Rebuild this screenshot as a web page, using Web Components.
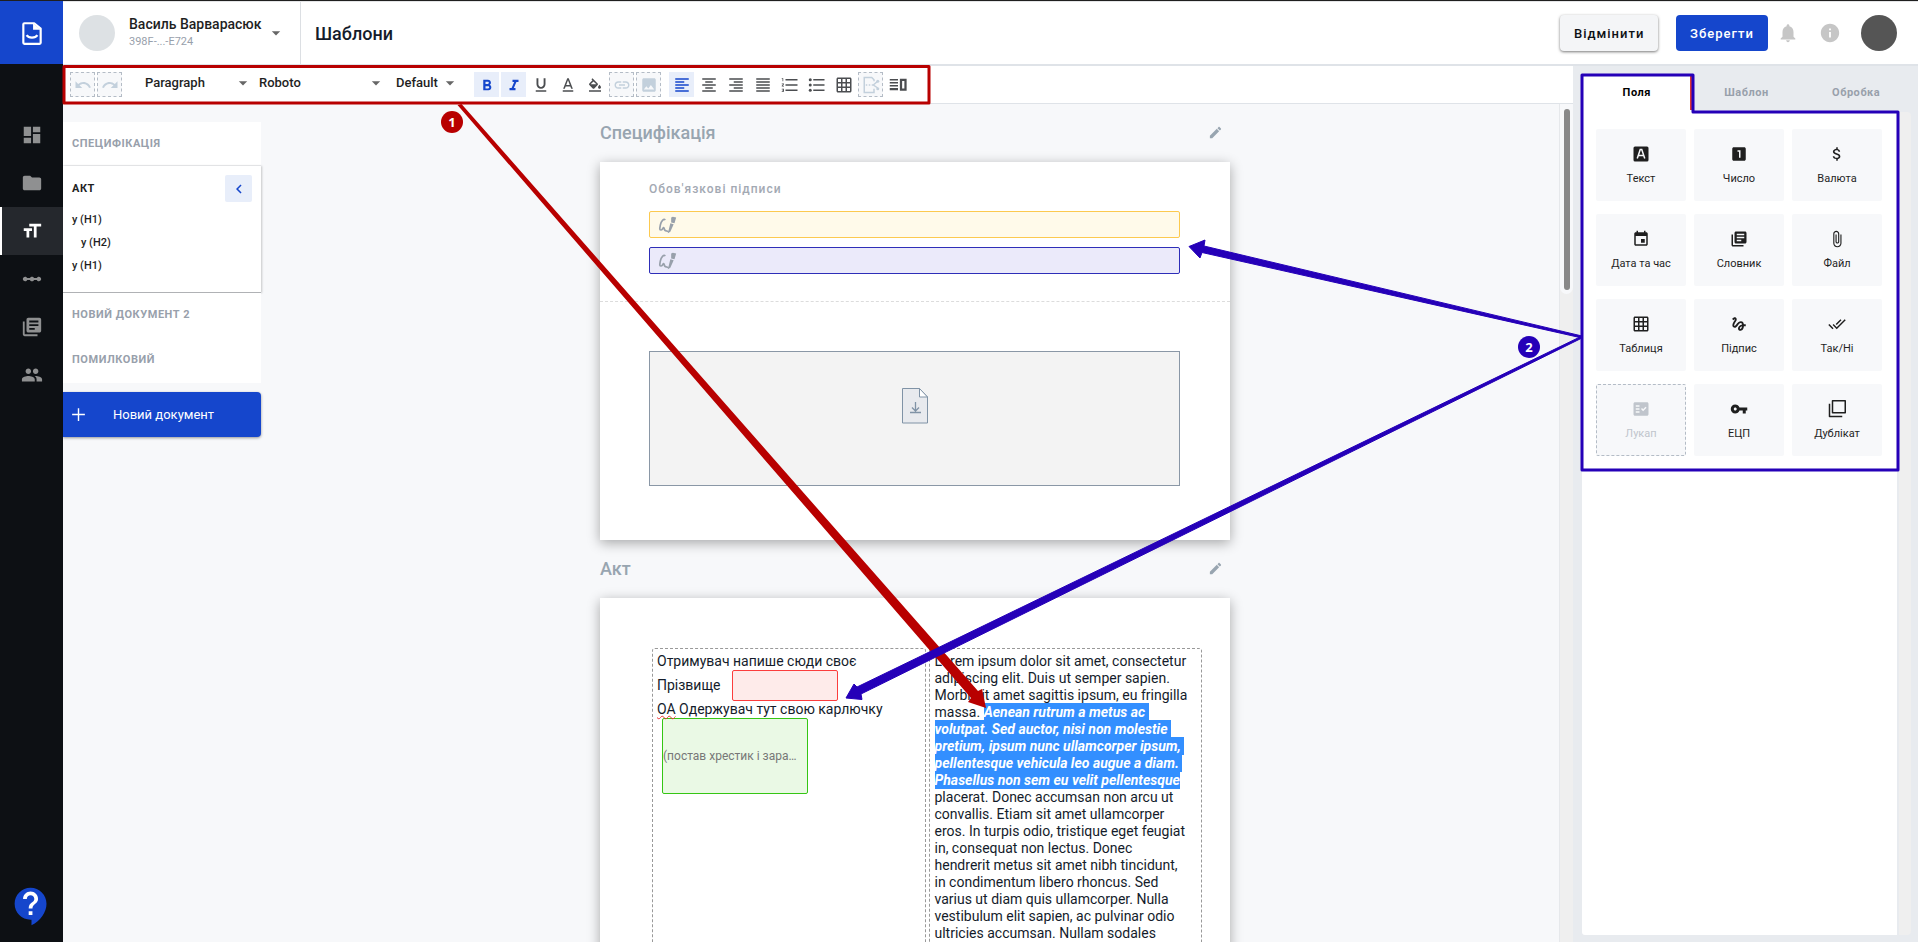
<!DOCTYPE html>
<html lang="uk">
<head>
<meta charset="utf-8">
<title>Шаблони</title>
<style>
html, body { height: 100%; }
body { margin: 0; overflow: hidden; font-family: Roboto, "Noto Sans", sans-serif; color: #1f1f1f; background: #f7f8fa; }
</style>
</head>
<body>
<template-app></template-app>
<script>
const P = d => `<path d="${d}"/>`;
const ICONS = {
  dashboard: P('M3 13h8V3H3v10zm0 8h8v-6H3v6zm10 0h8V11h-8v10zm0-18v6h8V3h-8z'),
  folder: P('M10 4H4c-1.1 0-1.99.9-1.99 2L2 18c0 1.1.9 2 2 2h16c1.1 0 2-.9 2-2V8c0-1.1-.9-2-2-2h-8l-2-2z'),
  size: P('M9 4v3h5v12h3V7h5V4H9zm-6 8h3v7h3v-7h3V9H3v3z'),
  linear: P('M19.5 9.5c-1.03 0-1.9.62-2.29 1.5h-2.92c-.39-.88-1.26-1.5-2.29-1.5s-1.9.62-2.29 1.5H6.79c-.39-.88-1.26-1.5-2.29-1.5C3.12 9.5 2 10.62 2 12s1.12 2.5 2.5 2.5c1.03 0 1.9-.62 2.29-1.5h2.92c.39.88 1.26 1.5 2.29 1.5s1.9-.62 2.29-1.5h2.92c.39.88 1.26 1.5 2.29 1.5 1.38 0 2.5-1.12 2.5-2.5s-1.12-2.5-2.5-2.5z'),
  books: P('M4 6H2v14c0 1.1.9 2 2 2h14v-2H4V6zm16-4H8c-1.1 0-2 .9-2 2v12c0 1.1.9 2 2 2h12c1.1 0 2-.9 2-2V4c0-1.1-.9-2-2-2zm-1 9H9V9h10v2zm-4 4H9v-2h6v2zm4-8H9V5h10v2z'),
  people: P('M16 11c1.66 0 2.99-1.34 2.99-3S17.66 5 16 5c-1.66 0-3 1.34-3 3s1.34 3 3 3zm-8 0c1.66 0 2.99-1.34 2.99-3S9.66 5 8 5C6.34 5 5 6.34 5 8s1.34 3 3 3zm0 2c-2.33 0-7 1.17-7 3.5V19h14v-2.5c0-2.33-4.67-3.5-7-3.5zm8 0c-.29 0-.62.02-.97.05 1.16.84 1.97 1.97 1.97 3.45V19h6v-2.5c0-2.33-4.67-3.5-7-3.5z'),
  help: '<circle cx="11.5" cy="10.5" r="7.5" fill="#fff"/>' + P('M11.5 2C6.81 2 3 5.81 3 10.5S6.81 19 11.5 19h.5v3c4.86-2.34 8-7 8-11.5C20 5.81 16.19 2 11.5 2zm1 14.5h-2v-2h2v2zm0-3.5h-2c0-3.25 3-3 3-5 0-1.1-.9-2-2-2s-2 .9-2 2h-2c0-2.21 1.79-4 4-4s4 1.79 4 4c0 2.5-3 2.75-3 5z'),
  logo: '<path d="M5 3h9l6 5v13q0 1-1 1H5q-1 0-1-1V4q0-1 1-1z" fill="none" stroke="currentColor" stroke-width="2" stroke-linejoin="round"/><path d="M13 3v6h7z"/><path d="M7 14c2 3 8 3 10 0" fill="none" stroke="currentColor" stroke-width="2"/>',
  undo: P('M12.5 8c-2.65 0-5.05.99-6.9 2.6L2 7v9h9l-3.62-3.62c1.39-1.16 3.16-1.88 5.12-1.88 3.54 0 6.55 2.31 7.6 5.5l2.37-.78C21.08 11.03 17.15 8 12.5 8z'),
  redo: P('M18.4 10.6C16.55 8.99 14.15 8 11.5 8c-4.65 0-8.58 3.03-9.96 7.22L3.9 16c1.05-3.19 4.05-5.5 7.6-5.5 1.95 0 3.73.72 5.12 1.88L13 16h9V7l-3.6 3.6z'),
  bold: P('M15.6 11.79c.97-.67 1.65-1.77 1.65-2.79 0-2.26-1.75-4-4-4H7v14h7.04c2.09 0 3.71-1.7 3.71-3.79 0-1.52-.86-2.82-2.15-3.42zM10 7.5h3c.83 0 1.5.67 1.5 1.5s-.67 1.5-1.5 1.5h-3v-3zm3.5 9H10v-3h3.5c.83 0 1.5.67 1.5 1.5s-.67 1.5-1.5 1.5z'),
  italic: P('M10 5v3h2.21l-3.42 8H6v3h8v-3h-2.21l3.42-8H18V5z'),
  underline: P('M12 17c3.31 0 6-2.69 6-6V3h-2.5v8c0 1.93-1.57 3.5-3.5 3.5S8.5 12.93 8.5 11V3H6v8c0 3.31 2.69 6 6 6zm-7 2v2h14v-2H5z'),
  color: P('M11 3L5.5 17h2.25l1.12-3h6.25l1.12 3h2.25L13 3h-2zm-1.38 9L12 5.67 14.38 12H9.62zM5 19h14v2H5z'),
  fill: P('M15.56 9.94L8.62 3 7.21 4.41l1.38 1.38-4.15 4.15c-.59.59-.59 1.54 0 2.12l4.5 4.5c.29.29.68.44 1.06.44s.77-.15 1.06-.44l4.5-4.5c.59-.58.59-1.53 0-2.12zM6.2 11L10 7.2 13.8 11zM18 11.5s-2 2.17-2 3.5c0 1.1.9 2 2 2s2-.9 2-2c0-1.33-2-3.5-2-3.5zM4 19h16v2H4z'),
  link: P('M3.9 12c0-1.71 1.39-3.1 3.1-3.1h4V7H7c-2.76 0-5 2.24-5 5s2.24 5 5 5h4v-1.9H7c-1.71 0-3.1-1.39-3.1-3.1zM8 13h8v-2H8v2zm9-6h-4v1.9h4c1.71 0 3.1 1.39 3.1 3.1s-1.39 3.1-3.1 3.1h-4V17h4c2.76 0 5-2.24 5-5s-2.24-5-5-5z'),
  image: P('M21 19V5c0-1.1-.9-2-2-2H5c-1.1 0-2 .9-2 2v14c0 1.1.9 2 2 2h14c1.1 0 2-.9 2-2zM8.5 13.5l2.5 3.01L14.5 12l4.5 6H5l3.5-4.5z'),
  left: P('M3 3h18v2H3zM3 7h12v2H3zM3 11h18v2H3zM3 15h12v2H3zM3 19h18v2H3z'),
  center: P('M3 3h18v2H3zM7 7h10v2H7zM3 11h18v2H3zM7 15h10v2H7zM3 19h18v2H3z'),
  right: P('M3 3h18v2H3zM9 7h12v2H9zM3 11h18v2H3zM9 15h12v2H9zM3 19h18v2H3z'),
  justify: P('M3 3h18v2H3zM3 7h18v2H3zM3 11h18v2H3zM3 15h18v2H3zM3 19h18v2H3z'),
  ol: P('M1 18h2v.5H2v1h1v.5H1v1h3v-4H1v1zm1-11h1V3H1v1h1v3zm-1 4h1.8L1 13.1v.9h3v-1H2.2L4 10.9V10H1v1zm5-7v2h16V4H6zm0 16h16v-2H6v2zm0-7h16v-2H6v2z'),
  ul: '<circle cx="3" cy="5" r="2"/><circle cx="3" cy="12" r="2"/><circle cx="3" cy="19" r="2"/>' + P('M7 4h15v2H7zM7 11h15v2H7zM7 18h15v2H7z'),
  grid: P('M20 2H4c-1.1 0-2 .9-2 2v16c0 1.1.9 2 2 2h16c1.1 0 2-.9 2-2V4c0-1.1-.9-2-2-2zM8 20H4v-4h4v4zm0-6H4v-4h4v4zm0-6H4V4h4v4zm6 12h-4v-4h4v4zm0-6h-4v-4h4v4zm0-6h-4V4h4v4zm6 12h-4v-4h4v4zm0-6h-4v-4h4v4zm0-6h-4V4h4v4z'),
  cut: '<path d="M16 7V5l-3-3H3v20h13v-5" fill="none" stroke="currentColor" stroke-width="2"/><path d="M5 12h2M9 12h2M13 12h2l6 4M15 12l6-5" fill="none" stroke="currentColor" stroke-width="2"/><circle cx="21" cy="7" r="2"/><circle cx="21" cy="17" r="2"/>',
  split: P('M1 4h11v2H1zM1 8h11v2H1zM1 12h11v2H1zM1 16h11v3H1z') + '<path d="M16 5h6v13h-6z" fill="none" stroke="currentColor" stroke-width="3"/>',
  chevron: P('M15.41 7.41L14 6l-6 6 6 6 1.41-1.41L10.83 12z'),
  add: P('M21 13h-8v8h-2v-8H3v-2h8V3h2v8h8z'),
  edit: P('M3 17.25V21h3.75L17.81 9.94l-3.75-3.75L3 17.25zM20.71 7.04c.39-.39.39-1.02 0-1.41l-2.34-2.34c-.39-.39-1.02-.39-1.41 0l-1.83 1.83 3.75 3.75 1.83-1.83z'),
  bell: P('M12 22c1.1 0 2-.9 2-2h-4c0 1.1.89 2 2 2zm6-6v-5c0-3.07-1.64-5.64-4.5-6.32V4c0-.83-.67-1.5-1.5-1.5s-1.5.67-1.5 1.5v.68C7.63 5.36 6 7.92 6 11v5l-2 2v1h16v-1l-2-2z'),
  info: P('M12 2C6.48 2 2 6.48 2 12s4.48 10 10 10 10-4.48 10-10S17.52 2 12 2zm1 15h-2v-6h2v6zm0-8h-2V7h2v2z'),
  caret: P('M7 10l5 5 5-5z'),
  text: '<rect x="2" y="2" width="20" height="20" rx="2"/><path d="M7 18l4-12h2l4 12M9 14h6" fill="none" stroke="#f7f8fa" stroke-width="2"/>',
  one: P('M19 3H5c-1.1 0-2 .9-2 2v14c0 1.1.9 2 2 2h14c1.1 0 2-.9 2-2V5c0-1.1-.9-2-2-2zm-5 14h-2V9h-2V7h4v10z'),
  money: P('M11.8 10.9c-2.27-.59-3-1.2-3-2.15 0-1.09 1.01-1.85 2.7-1.85 1.78 0 2.44.85 2.5 2.1h2.21c-.07-1.72-1.12-3.3-3.21-3.81V3h-2v2.16c-1.94.42-4.5 1.68-4.5 3.61 0 2.31 1.91 3.46 4.7 4.13 2.5.6 3 1.48 3 2.41 0 .69-.49 1.79-2.7 1.79-2.06 0-2.87-.92-2.98-2.1h-2.2c.12 2.19 1.76 3.42 4.68 3.83V21h2v-2.15c1.95-.37 3.5-1.5 3.5-3.55 0-2.84-2.43-3.81-4.7-4.4z'),
  event: P('M17 12h-5v5h5v-5zM16 1v2H8V1H6v2H5c-1.11 0-1.99.9-1.99 2L3 19c0 1.1.89 2 2 2h14c1.1 0 2-.9 2-2V5c0-1.1-.9-2-2-2h-1V1h-2zm3 18H5V8h14v11z'),
  attach: P('M16.5 6v11.5c0 2.21-1.79 4-4 4s-4-1.79-4-4V5c0-1.38 1.12-2.5 2.5-2.5s2.5 1.12 2.5 2.5v10.5c0 .55-.45 1-1 1s-1-.45-1-1V6H10v9.5c0 1.38 1.12 2.5 2.5 2.5s2.5-1.12 2.5-2.5V5c0-2.21-1.79-4-4-4S7 2.79 7 5v12.5c0 3.04 2.46 5.5 5.5 5.5s5.5-2.46 5.5-5.5V6h-1.5z'),
  gesture: P('M4.59 6.89c.7-.71 1.4-1.35 1.71-1.22.5.2 0 1.03-.3 1.52-.25.42-2.86 3.89-2.86 6.31 0 1.28.48 2.34 1.34 2.98.75.56 1.74.73 2.64.46 1.07-.31 1.95-1.4 3.06-2.77 1.21-1.49 2.83-3.44 4.08-3.44 1.63 0 1.65 1.01 1.76 1.79-3.78.64-5.38 3.67-5.38 5.37 0 1.7 1.44 3.09 3.21 3.09 1.63 0 4.29-1.33 4.69-6.1H21v-2.5h-2.47c-.15-1.65-1.09-4.2-4.03-4.2-2.25 0-4.18 1.91-4.94 2.84-.58.73-2.06 2.48-2.29 2.72-.25.3-.68.84-1.11.84-.45 0-.72-.83-.36-1.92.35-1.09 1.4-2.86 1.85-3.52.78-1.14 1.3-1.92 1.3-3.28C8.95 3.69 7.31 3 6.44 3 5.12 3 3.97 4 3.72 4.25c-.36.36-.66.66-.88.93l1.75 1.71zm9.29 11.66c-.31 0-.74-.26-.74-.72 0-.6.73-2.2 2.87-2.76-.3 2.69-1.43 3.48-2.13 3.48z'),
  done: P('M18 7l-1.41-1.41-6.34 6.34 1.41 1.41L18 7zm4.24-1.41L11.66 16.17 7.48 12l-1.41 1.41L11.66 19l12-12-1.42-1.41zM.41 13.41L6 19l1.41-1.41L1.83 12 .41 13.41z'),
  fact: P('M20 3H4c-1.1 0-2 .9-2 2v14c0 1.1.9 2 2 2h16c1.1 0 2-.9 2-2V5c0-1.1-.9-2-2-2zM10 17H5v-2h5v2zm0-4H5v-2h5v2zm0-4H5V7h5v2zm4.82 6L12 12.16l1.41-1.41 1.41 1.42L17.99 9l1.42 1.42L14.82 15z'),
  key: P('M12.65 10C11.83 7.67 9.61 6 7 6c-3.31 0-6 2.69-6 6s2.69 6 6 6c2.61 0 4.83-1.67 5.65-4H17v4h4v-4h2v-4H12.65zM7 14c-1.1 0-2-.9-2-2s.9-2 2-2 2 .9 2 2-.9 2-2 2z'),
  copy: '<path d="M6 1h17v16H6zM2 5v17h17" fill="none" stroke="currentColor" stroke-width="2" stroke-linejoin="round"/>',
  sign: '<path d="M10 6c-2-2-5 1-6 6s-1 6 1 6 2-3 3-3 0 4 3 4l3 1" fill="none" stroke="currentColor" stroke-width="2"/><path d="M17 3l2-1 4 1-2 7-4-1zM16 10l4 1-4 9-3 2 1-4z"/>'
};

const define = (name, css, html) => customElements.define(name, class extends HTMLElement {
  connectedCallback() {
    if (this.shadowRoot) return;
    const root = this.attachShadow({ mode: 'open' });
    const tpl = document.createElement('template');
    tpl.innerHTML = `<style>*{box-sizing:border-box}button,select,input{font:inherit;color:inherit;margin:0;padding:0;border:0;background:none}${css}</style>` + (typeof html === 'function' ? html(this) : html);
    root.append(tpl.content.cloneNode(true));
  }
});

define('ui-icon', `:host{display:block;width:var(--icon,24px);height:var(--icon,24px);flex:none}svg{display:block;width:100%;height:100%;fill:currentColor}`,
  el => `<svg viewBox="0 0 24 24" aria-hidden="true">${ICONS[el.getAttribute('name')]}</svg>`);

define('side-bar', `:host{display:flex;flex-direction:column;width:63px;background:#0d1014;color:#8f9091;--icon:22px}
a{height:48px;display:grid;place-items:center;color:inherit}
.logo{height:63px;background:#1546cc;color:#fff;margin-bottom:47px;--icon:26px}
a.on{background:#25282d;box-shadow:inset 2px 0 #fff;color:#fff}
.help{margin-top:auto;margin-bottom:12px;color:#1546cc;--icon:45px}`,
  `<a class="logo" href="#" aria-label="Головна"><ui-icon name="logo"></ui-icon></a>
  ${['dashboard', 'folder', 'size', 'linear', 'books', 'people'].map(n => `<a href="#" aria-label="${n}" ${n === 'size' ? 'class="on"' : ''}><ui-icon name="${n}"></ui-icon></a>`).join('')}
  <a class="help" href="#" aria-label="Довідка"><ui-icon name="help"></ui-icon></a>`);

define('top-bar', `:host{display:flex;align-items:stretch;height:65px;background:#fff;border-bottom:2px solid #dfe3e8;border-top:1px solid #e4e5e7}
.user{display:flex;align-items:center;width:238px;padding:0 14px 0 16px;border-right:1px solid #dcdfe3;text-align:left}
.face{width:36px;height:36px;border-radius:50%;background:#dde1e4;margin-right:14px}
.who{flex:1;white-space:nowrap;padding-bottom:3px}.name{font-size:14px;line-height:19px;font-weight:500;display:block}.id{font-size:11px;line-height:15px;color:#98a0ab;display:block}
.user ui-icon{--icon:20px;color:#666}
h1{margin:0;padding-left:14px;font-size:18px;font-weight:500;line-height:63px;color:#141c2b;flex:1}
.act{display:flex;align-items:center;padding-right:21px}
.btn{height:36px;border-radius:4px;font-size:13px;font-weight:500;letter-spacing:1px;padding:0 14px;background:#f4f5f7;color:#0d1014;box-shadow:0 1px 3px #0008;width:98px;margin-right:18px}
.btn.main{background:#1546cc;color:#fff;box-shadow:none;width:92px;margin-right:9px}
.ic{color:#c6c6c6;--icon:22px;margin-right:20px}.me{width:36px;height:36px;border-radius:50%;background:#555}`,
  `<button class="user"><span class="face"></span><span class="who"><span class="name">Василь Варварасюк</span><span class="id">398F-...-E724</span></span><ui-icon name="caret"></ui-icon></button>
  <h1>Шаблони</h1>
  <div class="act"><button class="btn">Відмінити</button><button class="btn main">Зберегти</button>
  <button class="ic" aria-label="Сповіщення"><ui-icon name="bell"></ui-icon></button><button class="ic" aria-label="Інформація"><ui-icon name="info"></ui-icon></button><button class="me" aria-label="Профіль"></button></div>`);

define('tool-button', `:host{display:block;flex:none}button{width:25px;height:25px;display:grid;place-items:center;color:#4b4d50;--icon:18px}
:host([on]) button{background:#e8eefa;color:#1546cc}
:host([off]) button{border:1px dashed #b4bcc6;background:#f7f8fa;color:#c3d0dc}`,
  el => `<button aria-label="${el.getAttribute('icon')}" ${el.hasAttribute('off') ? 'disabled' : ''}><ui-icon name="${el.getAttribute('icon')}"></ui-icon></button>`);

define('tool-select', `:host{display:flex;align-items:center;flex:none;position:relative;padding-bottom:4px}
select{appearance:none;width:100%;height:21px;font-size:13px;font-weight:500;outline:0}
ui-icon{--icon:20px;color:#666;position:absolute;right:0;pointer-events:none}`,
  el => `<select aria-label="${el.getAttribute('label')}"><option>${el.getAttribute('value')}</option></select><ui-icon name="caret"></ui-icon>`);

const tool = s => s.split(' ').map(t => { const [n, f] = t.split(':'); return `<tool-button icon="${n}" ${f || ''}></tool-button>`; }).join('');
define('tool-bar', `:host{display:flex;align-items:center;height:38px;background:#fff;border-bottom:1px solid #dfe3e8;padding-left:7px}
.set{display:flex;gap:2px}.mid{margin:0 8px 0 14px}.p{width:108px;margin-left:23px}.r{width:127px;margin-left:6px}.d{width:64px;margin-left:10px}`,
  `<div class="set">${tool('undo:off redo:off')}</div>
  <tool-select class="p" label="Стиль" value="Paragraph"></tool-select><tool-select class="r" label="Шрифт" value="Roboto"></tool-select><tool-select class="d" label="Розмір" value="Default"></tool-select>
  <div class="set mid">${tool('bold:on italic:on underline color fill link:off image:off')}</div>
  <div class="set">${tool('left:on center right justify ol ul grid cut:off split')}</div>`);

define('doc-nav', `:host{display:block;width:198px;padding-top:18px}
a{color:inherit;text-decoration:none}
.item{display:flex;align-items:center;height:45px;padding:0 0 2px 9px;background:#fff;font-size:11px;font-weight:700;letter-spacing:.05em;color:#98a0ab}
.spec{height:44px;padding-bottom:0;border-bottom:1px solid #f2f3f5}
.open{height:127px;background:#fff;border-bottom:1px solid #b0b2b5;box-shadow:1px 0 2px #0003;padding:9px 9px 0;color:#1f1f1f}
.head{display:flex;justify-content:space-between;align-items:center;height:27px;font-size:11px;font-weight:700;letter-spacing:.05em}
.head button{width:27px;height:27px;border-radius:2px;background:#e8eefa;color:#1546cc;display:grid;place-items:center;--icon:18px}
.sub{display:block;font-size:11px;line-height:23px;font-weight:500}.first{margin-top:6px}.deep{padding-left:9px}
.new{width:100%;height:45px;margin-top:9px;background:#1546cc;color:#fff;border-radius:0 4px 4px 0;box-shadow:0 1px 3px #0006;display:flex;align-items:center;padding-left:7px;gap:26px;font-size:13px;--icon:17px}`,
  `<a class="item spec" href="#">СПЕЦИФІКАЦІЯ</a>
  <div class="open"><div class="head"><a href="#">АКТ</a><button aria-label="Згорнути"><ui-icon name="chevron"></ui-icon></button></div>
  <a class="sub first" href="#">у (H1)</a><a class="sub deep" href="#">у (H2)</a><a class="sub" href="#">у (H1)</a></div>
  <a class="item" href="#">НОВИЙ ДОКУМЕНТ 2</a><a class="item" href="#">ПОМИЛКОВИЙ</a>
  <button class="new"><ui-icon name="add"></ui-icon><span>Новий документ</span></button>`);

define('doc-section', `:host{display:block;width:630px}
.title{display:flex;align-items:center;justify-content:space-between;height:58px;padding:0 7px 2px 0;color:#98a5b0}
h2{margin:0;font-size:18px;font-weight:500}.title button{--icon:15px;display:grid}
.page{background:#fff;box-shadow:0 3px 12px #0005}`,
  el => `<div class="title"><h2>${el.getAttribute('heading')}</h2><button aria-label="Редагувати"><ui-icon name="edit"></ui-icon></button></div><div class="page"><slot></slot></div>`);

define('spec-form', `:host{display:block;height:378px}
.signs{height:140px;padding:18px 49px 0;border-bottom:1px dashed #dcdcdc}
h3{margin:0 0 13px;font-size:12px;line-height:18px;font-weight:500;letter-spacing:1px;color:#a3a9b3}
.sign{display:flex;align-items:center;width:531px;height:27px;border:1px solid #fcc94f;border-radius:2px;background:#fffaea;padding-left:7px;margin-bottom:9px;color:#98a0ab;--icon:20px}
.sign.b{border-color:#2e2eb8;background:#ebeafa}
.drop{width:531px;height:135px;margin:49px 49px 0;border:1px solid #8a97a6;background:#f3f3f3;display:flex;justify-content:center;padding-top:35px}
.drop svg{width:28px;height:37px}`,
  `<div class="signs"><h3>Обов'язкові підписи</h3><button class="sign" aria-label="Підпис 1"><ui-icon name="sign"></ui-icon></button><button class="sign b" aria-label="Підпис 2"><ui-icon name="sign"></ui-icon></button></div>
  <button class="drop" aria-label="Завантажити файл"><svg viewBox="0 0 28 37" fill="#e8eaee" stroke="#8093a6"><path d="M1.5 1.5h17l8 8.500v26h-25z"/><path d="M18.500 1.500v8.500h8z" fill="#fff"/><path d="M14.500 15v9M11 20.500l3.500 3.500 3.500-3.500M9 25.500h11" fill="none" stroke-width="1.300"/></svg></button>`);

define('act-sheet', `:host{display:flex;gap:3px;padding:50px 28px 50px 52px;font-size:14px;line-height:17px;color:#141c2b}
.col{width:274px;min-height:400px;border:1px dashed #999;border-radius:3px;padding:4px 4px;white-space:nowrap}
.col+.col{padding-left:5px}
p{margin:0}.row{display:flex;align-items:center;height:31px;gap:11px}
.row input{width:106px;height:31px;border:1px solid #fb3d3d;border-radius:2px;background:#feebea}
.miss{text-decoration:underline wavy #e33;text-decoration-thickness:1px}
.mark{display:block;width:146px;height:76px;margin-left:5px;border:1px solid #35c614;border-radius:2px;background:#eaf9e5;color:#777;font-size:12px}
.hl{background:#338fff;color:#fff;font-weight:700;font-style:italic;padding:1px 0}`,
  `<div class="col"><p>Отримувач напише сюди своє</p><div class="row"><label for="sur">Прізвище</label><input id="sur"></div><p><span class="miss">ОА</span> Одержувач тут свою карлючку</p><input class="mark" aria-label="Позначка" value="(постав хрестик і зара…"></div>
  <div class="col"><p>Lorem ipsum dolor sit amet, consectetur<br>adipiscing elit. Duis ut semper sapien.<br>Morbi sit amet sagittis ipsum, eu fringilla<br>massa. <span class="hl">Aenean rutrum a metus ac&nbsp;<br>volutpat. Sed auctor, nisi non molestie&nbsp;<br>pretium, ipsum nunc ullamcorper ipsum,&nbsp;<br>pellentesque vehicula leo augue a diam.&nbsp;<br>Phasellus non sem eu velit pellentesque</span><br>placerat. Donec accumsan non arcu ut<br>convallis. Etiam sit amet ullamcorper<br>eros. In turpis odio, tristique eget feugiat<br>in, consequat non lectus. Donec<br>hendrerit metus sit amet nibh tincidunt,<br>in condimentum libero rhoncus. Sed<br>varius ut diam quis ullamcorper. Nulla<br>vestibulum elit sapien, ac pulvinar odio<br>ultricies accumsan. Nullam sodales</p></div>`);

define('field-tile', `:host{display:block}button{width:100%;height:72px;display:flex;flex-direction:column;align-items:center;justify-content:center;gap:7px;padding-top:1px;background:#f7f8fa;border-radius:2px;font-size:11px;line-height:17px;color:#1f1f1f;--icon:18px}
:host([off]) button{border:1px dashed #b4bcc6;color:#c0c5cc}`,
  el => `<button ${el.hasAttribute('off') ? 'disabled' : ''}><ui-icon name="${el.getAttribute('icon')}"></ui-icon><slot></slot></button>`);

define('field-panel', `:host{display:flex;flex-direction:column;width:345px;background:#e8ebef;padding:8px 7px 7px 9px}
.tabs{display:grid;grid-template-columns:repeat(3,1fr);height:38px}
.tabs button{font-size:11px;font-weight:700;letter-spacing:.05em;color:#98a0ab;padding-bottom:2px}
.tabs .on{background:#fff;color:#000}
.body{flex:1;display:flex;gap:2px;min-height:0}
.sheet{flex:1;background:#fff;border-radius:0 0 0 3px;padding:17px 15px 17px 14px}
.grid{display:grid;grid-template-columns:repeat(3,1fr);column-gap:8px;row-gap:13px}
.track{width:12px;background:#efefef;border-radius:0 4px 4px 0}`,
  `<div class="tabs" role="tablist"><button role="tab" class="on">Поля</button><button role="tab">Шаблон</button><button role="tab">Обробка</button></div>
  <div class="body"><div class="sheet"><div class="grid">${[['text', 'Текст'], ['one', 'Число'], ['money', 'Валюта'], ['event', 'Дата та час'], ['books', 'Словник'], ['attach', 'Файл'], ['grid', 'Таблиця'], ['gesture', 'Підпис'], ['done', 'Так/Ні'], ['fact', 'Лукап', 'off'], ['key', 'ЕЦП'], ['copy', 'Дублікат']].map(([i, t, o]) => `<field-tile icon="${i}" ${o || ''}>${t}</field-tile>`).join('')}</div></div><div class="track"></div></div>`);

define('callout-layer', `:host{position:absolute;inset:-1px 0 0;pointer-events:none;overflow:hidden}svg{display:block;width:100%;height:100%}
span{position:absolute;width:22px;height:22px;border-radius:50%;background:#b80000;color:#fff;font:700 13px/22px "Noto Sans",sans-serif;text-align:center;left:441px;top:111px}
.two{background:#2500b8;left:1518px;top:336px}`,
  `<svg aria-hidden="true"><g fill="none" stroke-width="3" stroke-linejoin="round"><path d="M64 66.500h865v36.500H64z" stroke="#b80000"/><path d="M1691 76v34" stroke="#d33" stroke-width="2"/><path d="M1582 75h111v37h205v358h-316z" stroke="#2500b8"/></g>
  <path fill="#b80000" d="M457.500 105l4-1L978 691l4-2 4 19-18-6 3-4z"/>
  <path fill="#2500b8" stroke="#2500b8" stroke-linejoin="round" d="M1582 336l-378-90 1-6-16 6.500 11 11.500 2-5.500L1582 338z"/>
  <path fill="#2500b8" stroke="#2500b8" stroke-linejoin="round" d="M1582 336L857 687l-3-3-8 14 16 1.500-1-5.500L1582 338z"/></svg><span>1</span><span class="two">2</span>`);

define('template-app', `:host{display:flex;height:100vh;box-sizing:border-box;position:relative;border-top:1px solid #1f1f1f;background:#f7f8fa;overflow:hidden}
.main{flex:1;display:flex;flex-direction:column;min-width:0}.work{flex:1;display:flex;min-height:0}
.edit{flex:1;display:flex;flex-direction:column;min-width:0}.area{flex:1;display:flex;min-height:0}
.docs{flex:1;display:flex;flex-direction:column;align-items:center;overflow:hidden;padding-left:10px}
.bar{width:14px;background:#efefef;border-left:1px solid #e6e8eb}
.thumb{height:190px;background:#f7f8fa;border-radius:0 0 7px 7px;padding:5px 3px 4px 4px}.thumb i{display:block;width:6px;height:100%;border-radius:3px;background:#888}`,
  `<side-bar></side-bar><div class="main"><top-bar></top-bar><div class="work"><div class="edit"><tool-bar></tool-bar><div class="area"><doc-nav></doc-nav>
  <div class="docs"><doc-section heading="Специфікація"><spec-form></spec-form></doc-section><doc-section heading="Акт"><act-sheet></act-sheet></doc-section></div><div class="bar"><div class="thumb"><i></i></div></div></div></div><field-panel></field-panel></div></div><callout-layer></callout-layer>`);
</script>
</body>
</html>
